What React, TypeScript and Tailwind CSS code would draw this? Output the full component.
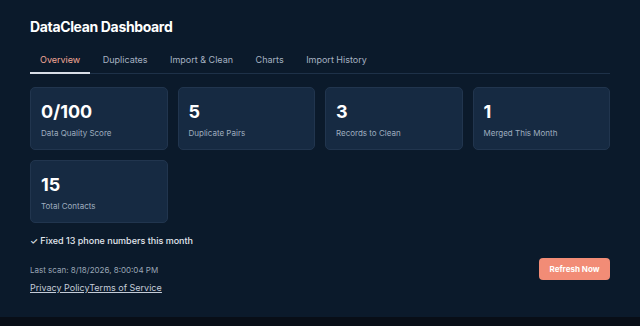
import React from 'react';

const tabs = ['Overview', 'Duplicates', 'Import & Clean', 'Charts', 'Import History'];

const stats = [
  { value: '0/100', label: 'Data Quality Score' },
  { value: '5', label: 'Duplicate Pairs' },
  { value: '3', label: 'Records to Clean' },
  { value: '1', label: 'Merged This Month' },
  { value: '15', label: 'Total Contacts' },
];

export default function App() {
  return (
    <div className="w-[640px] h-[326px] flex flex-col bg-[#0b1a2b] text-white" style={{ fontFamily: 'Inter, "Noto Sans", sans-serif' }}>
      <div className="flex-1 px-[30px] pt-[17px]">
        <h1 className="text-[14px] font-bold leading-[20px] tracking-tight">DataClean Dashboard</h1>

        <nav className="mt-[17px] flex gap-[2.5px] border-b border-[#1e3148]">
          {tabs.map((t, i) => (
            <div
              key={t}
              className={
                i === 0
                  ? 'px-[10px] pb-[6px] text-[9px] leading-[12px] text-[#f3a896] border-b-2 border-[#d8dde6] -mb-px'
                  : 'px-[10px] pb-[6px] text-[9px] leading-[12px] text-[#a6b2c2]'
              }
            >
              {t}
            </div>
          ))}
        </nav>

        <div className="mt-[13px] grid grid-cols-4 gap-[10px]">
          {stats.map((s) => (
            <div key={s.label} className="h-[63px] rounded-[5px] border border-[#21354e] bg-[#162a42] px-[10px] pt-[13px]">
              <div className="text-[18px] font-bold leading-[22px]">{s.value}</div>
              <div className="mt-[5px] text-[8px] leading-[10px] text-[#9fadbf]">{s.label}</div>
            </div>
          ))}
        </div>

        <div className="mt-[12px] text-[9px] font-medium leading-[12px] text-[#e3e8ef]">✓ Fixed 13 phone numbers this month</div>

        <div className="mt-[7px] flex items-start justify-between">
          <div>
            <div className="mt-[11px] text-[8px] leading-[10px] text-[#9aa6b6]">Last scan: 8/18/2026, 8:00:04 PM</div>
            <div className="mt-[7px] text-[9px] leading-[12px] text-[#c4ccd8] underline">
              <a>Privacy Policy</a>
              <a>Terms of Service</a>
            </div>
          </div>
          <button className="mt-[4px] h-[22px] w-[71px] rounded-[4px] bg-[#f28c76] text-[8px] font-bold text-white">
            Refresh Now
          </button>
        </div>
      </div>
      <div className="h-[9px] bg-[#080e17]" />
    </div>
  );
}
